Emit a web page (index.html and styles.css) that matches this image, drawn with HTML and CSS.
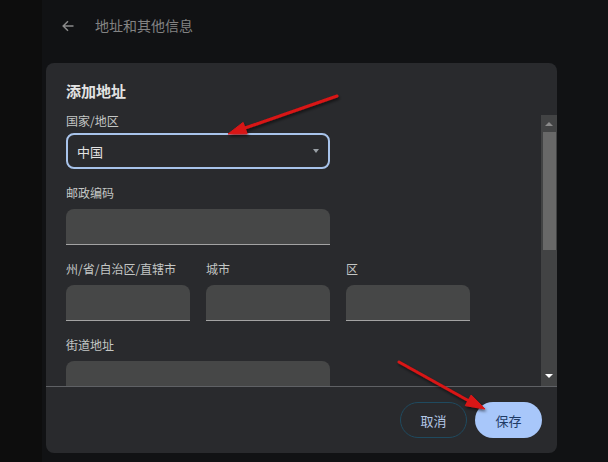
FILE: index.html
```html
<!DOCTYPE html>
<html lang="zh-CN">
<head>
<meta charset="utf-8">
<title>添加地址</title>
<link rel="stylesheet" href="styles.css">
</head>
<body>
<div class="rail"></div>
<div class="main">
  <div class="header">
    <svg class="back" width="12" height="12" viewBox="0 0 12 12"><path d="M11.5 6H1.2M6 1.2L1.2 6L6 10.8" fill="none" stroke="#8a8a8a" stroke-width="1.5"/></svg>
    <span class="page-title">地址和其他信息</span>
  </div>
  <div class="dialog">
    <div class="dlg-title">添加地址</div>
    <div class="dlg-body">
      <div class="form">
        <div class="label">国家/地区</div>
        <div class="select"><span>中国</span><span class="caret"></span></div>
        <div class="label spaced">邮政编码</div>
        <div class="input wide"></div>
        <div class="row">
          <div class="col"><div class="label spaced">州/省/自治区/直辖市</div><div class="input narrow"></div></div>
          <div class="col"><div class="label spaced">城市</div><div class="input narrow"></div></div>
          <div class="col"><div class="label spaced">区</div><div class="input narrow"></div></div>
        </div>
        <div class="label spaced">街道地址</div>
        <div class="input wide"></div>
      </div>
      <div class="scrollbar">
        <div class="sb-btn"><span class="tri-up"></span></div>
        <div class="sb-track"><div class="sb-thumb"></div></div>
        <div class="sb-btn bottom"><span class="tri-down"></span></div>
      </div>
    </div>
    <div class="dlg-foot">
      <button class="btn cancel">取消</button>
      <button class="btn save">保存</button>
    </div>
  </div>
</div>
<svg class="annot" width="608" height="462" viewBox="0 0 608 462">
  <defs>
    <filter id="sh" x="-20%" y="-20%" width="140%" height="140%">
      <feDropShadow dx="1" dy="2" stdDeviation="1.5" flood-color="#000" flood-opacity="0.6"/>
    </filter>
  </defs>
  <g filter="url(#sh)" fill="#d81414" stroke="#d81414">
    <line x1="337" y1="96" x2="245" y2="128" stroke-width="3" stroke-linecap="round"/>
    <polygon points="228,134 247.1,133.8 243.1,122.4" stroke-width="1"/>
    <line x1="399" y1="362" x2="469" y2="401" stroke-width="3" stroke-linecap="round"/>
    <polygon points="485,409 465.3,405.6 471.1,395.0" stroke-width="1"/>
  </g>
</svg>
</body>
</html>
```
FILE: styles.css
```css
* { box-sizing: border-box; }
html, body { margin: 0; padding: 0; }
body {
  width: 608px;
  height: 462px;
  overflow: hidden;
  background: #111214;
  display: flex;
  font-family: "Noto Sans CJK SC", "Noto Sans", sans-serif;
  position: relative;
}
.rail { width: 42px; background: #0d0d0d; flex: none; }
.main { flex: 1; padding-left: 4px; }
.header {
  height: 50px;
  display: flex;
  align-items: center;
  padding-left: 16px;
}
.back { margin-top: 1px; }
.page-title {
  margin-left: 21px;
  font-size: 14px;
  color: #838383;
}
.dialog {
  margin-top: 13px;
  width: 511px;
  height: 390px;
  background: #292a2d;
  border-radius: 8px;
  display: flex;
  flex-direction: column;
  overflow: hidden;
}
.dlg-title {
  height: 50px;
  padding: 18px 20px 0;
  font-size: 15px;
  line-height: 20px;
  font-weight: bold;
  color: #e3e3e3;
}
.dlg-body {
  height: 273px;
  display: flex;
}
.form {
  flex: 1;
  padding-left: 20px;
  overflow: hidden;
}
.label {
  font-size: 12px;
  line-height: 16px;
  color: #c4c7c5;
  white-space: nowrap;
}
.label.spaced { margin-top: 16px; margin-bottom: 8px; }
.select {
  margin-top: 4px;
  width: 264px;
  height: 36px;
  border: 2px solid #a8c3ea;
  border-radius: 8px;
  display: flex;
  align-items: center;
  justify-content: space-between;
  padding: 0 9px;
  font-size: 13px;
  color: #e3e3e3;
}
.caret {
  width: 0; height: 0;
  border-left: 3.5px solid transparent;
  border-right: 3.5px solid transparent;
  border-top: 4px solid #9aa0a6;
}
.input {
  height: 36px;
  background: #464747;
  border-radius: 8px 8px 0 0;
  border-bottom: 1px solid #a3a3a3;
}
.input.wide { width: 264px; }
.input.narrow { width: 124px; }
.row { display: flex; gap: 16px; }
.scrollbar {
  width: 16px;
  margin-top: 2px;
  background: #424344;
  display: flex;
  flex-direction: column;
}
.sb-btn {
  height: 17px;
  display: flex;
  justify-content: center;
  align-items: center;
}
.sb-btn.bottom { height: 20px; }
.tri-up {
  width: 0; height: 0;
  border-left: 4px solid transparent;
  border-right: 4px solid transparent;
  border-bottom: 4px solid #8a8a8a;
}
.tri-down {
  width: 0; height: 0;
  border-left: 4px solid transparent;
  border-right: 4px solid transparent;
  border-top: 4px solid #ffffff;
}
.sb-track { flex: 1; padding: 0 1px 0 2px; }
.sb-thumb { height: 118px; background: #686868; }
.dlg-foot {
  flex: 1;
  border-top: 1px solid #5f6165;
  display: flex;
  justify-content: flex-end;
  align-items: center;
  gap: 8px;
  padding-right: 15px;
}
.btn {
  width: 67px;
  height: 36px;
  border-radius: 18px;
  font-family: "Noto Sans CJK SC", "Noto Sans", sans-serif;
  font-size: 13px;
  padding: 0;
}
.cancel {
  background: transparent;
  border: 1px solid #1f4a5f;
  color: #b3c7e6;
}
.save {
  background: #a8c7fa;
  border: none;
  color: #1f3b66;
}
.annot { position: absolute; left: 0; top: 0; pointer-events: none; }
```
